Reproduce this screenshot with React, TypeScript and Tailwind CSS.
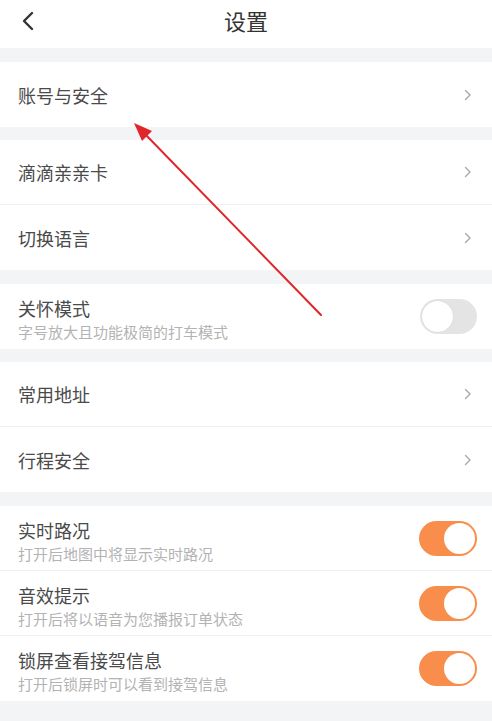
import React from "react";

const Chevron = () => (
  <svg width="8" height="12" viewBox="0 0 8 12" className="shrink-0">
    <path d="M1.5 1.5 L6 6 L1.5 10.5" fill="none" stroke="#a8a8a8" strokeWidth="1.4" strokeLinecap="round" strokeLinejoin="round" />
  </svg>
);

const Toggle = ({ on }: { on: boolean }) =>
  on ? (
    <div className="w-[58px] h-[35px] rounded-full bg-[#f98d4b] flex items-center justify-end pr-[2px] shrink-0">
      <div className="w-[31px] h-[31px] rounded-full bg-white" />
    </div>
  ) : (
    <div className="w-[57px] h-[35px] rounded-full bg-[#e4e4e4] flex items-center justify-start pl-[2px] shrink-0">
      <div className="w-[31px] h-[31px] rounded-full bg-white shadow-[0_0_1px_rgba(0,0,0,0.15)]" />
    </div>
  );

const NavRow = ({ label, border }: { label: string; border?: boolean }) => (
  <div className={`h-[65px] flex items-center justify-between pl-[18px] pr-[20px] bg-white ${border ? "border-b border-[#efefef]" : ""}`}>
    <span className="text-[18px] text-[#4a4a4a] leading-none">{label}</span>
    <Chevron />
  </div>
);

const ToggleRow = ({ label, sub, on, border }: { label: string; sub: string; on: boolean; border?: boolean }) => (
  <div className={`h-[65px] flex items-center justify-between pl-[18px] pr-[15px] bg-white ${border ? "border-b border-[#efefef]" : ""}`}>
    <div className="flex flex-col gap-[5px] pt-[5px]">
      <span className="text-[18px] text-[#4a4a4a] leading-[20px]">{label}</span>
      <span className="text-[15px] text-[#b3b3b3] leading-[17px]">{sub}</span>
    </div>
    <Toggle on={on} />
  </div>
);

const Band = ({ h }: { h: string }) => <div className={`${h} bg-[#f3f4f6]`} />;

export default function App() {
  return (
    <div className="relative w-[492px] h-[721px] overflow-hidden bg-[#f3f4f6]" style={{ fontFamily: '"Noto Sans CJK SC", "Noto Sans", sans-serif' }}>
      <div className="h-[48px] bg-white relative flex items-center justify-center">
        <svg width="14" height="20" viewBox="0 0 14 20" className="absolute left-[21px] top-[11px]">
          <path d="M11 2 L3 10 L11 18" fill="none" stroke="#333" strokeWidth="2.4" strokeLinecap="round" strokeLinejoin="round" />
        </svg>
        <span className="text-[22px] text-[#333] leading-none -mt-[8px]">设置</span>
      </div>
      <Band h="h-[14px]" />
      <NavRow label="账号与安全" />
      <Band h="h-[13px]" />
      <NavRow label="滴滴亲亲卡" border />
      <NavRow label="切换语言" />
      <Band h="h-[14px]" />
      <ToggleRow label="关怀模式" sub="字号放大且功能极简的打车模式" on={false} />
      <Band h="h-[13px]" />
      <NavRow label="常用地址" border />
      <NavRow label="行程安全" />
      <Band h="h-[14px]" />
      <ToggleRow label="实时路况" sub="打开后地图中将显示实时路况" on border />
      <ToggleRow label="音效提示" sub="打开后将以语音为您播报订单状态" on border />
      <ToggleRow label="锁屏查看接驾信息" sub="打开后锁屏时可以看到接驾信息" on />

      <svg className="absolute left-0 top-0 pointer-events-none" width="492" height="721" viewBox="0 0 492 721">
        <line x1="321" y1="315" x2="143" y2="132" stroke="#e0262a" strokeWidth="2" strokeLinecap="round" />
        <polygon points="134,123 152,131 142,141" fill="#e0262a" />
      </svg>
    </div>
  );
}
